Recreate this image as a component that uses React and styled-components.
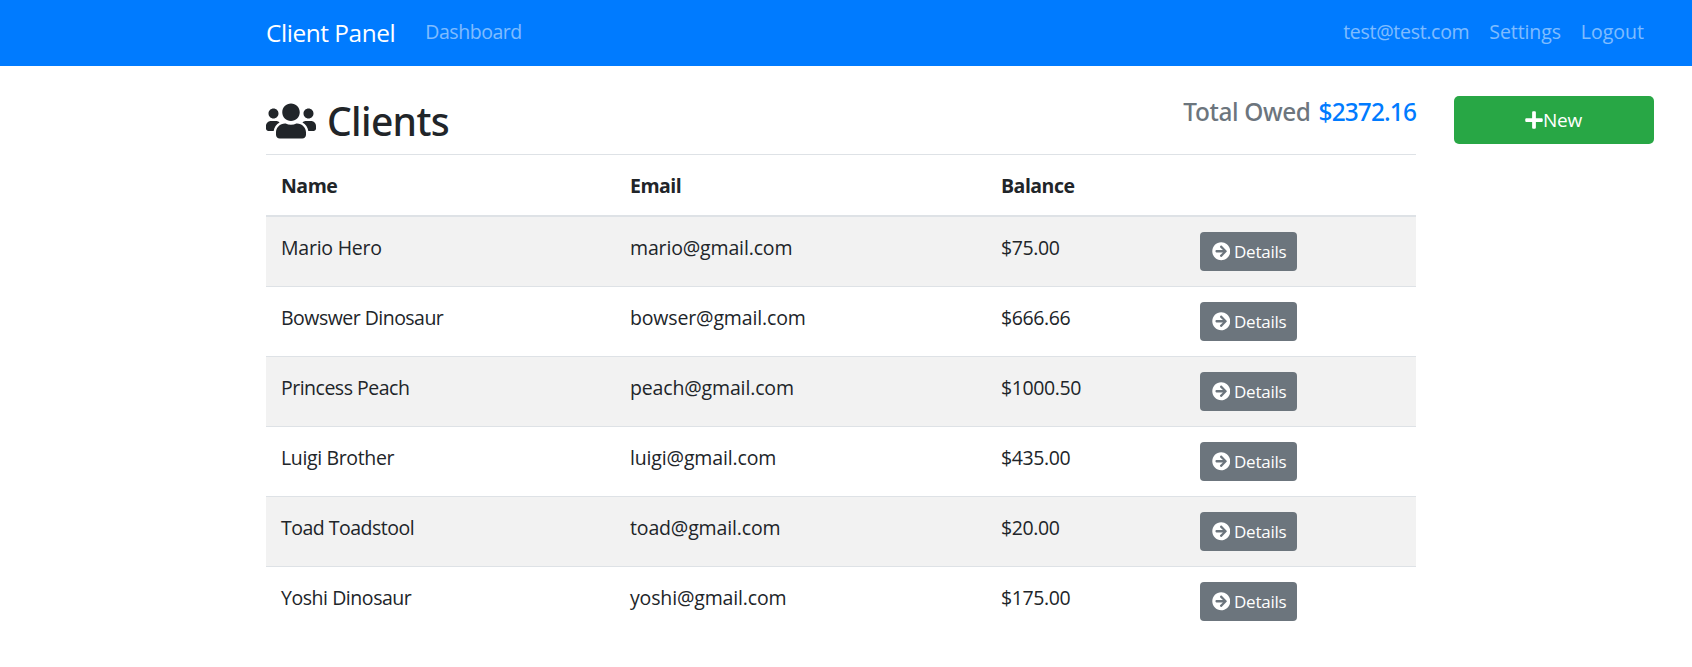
import React from "react";
import styled, { createGlobalStyle } from "styled-components";
import { FaUsers, FaPlus, FaArrowCircleRight } from "react-icons/fa";

const GlobalStyle = createGlobalStyle`
  *, *::before, *::after { box-sizing: border-box; }
  body {
    margin: 0;
    background: #fff;
    color: #212529;
    font-family: "Open Sans", "Noto Sans", sans-serif;
    font-size: 19.5px;
    line-height: 30px;
  }
`;

const Navbar = styled.nav`
  display: flex;
  align-items: center;
  height: 66px;
  padding: 0 48px 0 266px;
  background: #007bff;
`;

const Brand = styled.a`
  margin-right: 30px;
  color: #fff;
  font-size: 24.4px;
  letter-spacing: -0.43px;
  white-space: nowrap;
`;

const NavList = styled.div`
  display: flex;
  gap: 20px;
  margin-left: ${(p) => (p.$end ? "auto" : "0")};
  padding-bottom: 3px;
`;

const NavLink = styled.a`
  color: rgba(255, 255, 255, 0.5);
  letter-spacing: ${(p) => p.$track || 0}px;
`;

const Page = styled.div`
  display: grid;
  grid-template-columns: 1150px 200px;
  column-gap: 38px;
  align-items: start;
  padding: 30px 0 0 266px;
`;

const Header = styled.header`
  display: flex;
  justify-content: space-between;
  height: 58px;
  padding-top: 1px;
`;

const Title = styled.h2`
  display: flex;
  align-items: center;
  gap: 11px;
  height: 48px;
  margin: 0;
  font: 500 39px/48px "Noto Sans", sans-serif;
  letter-spacing: -0.65px;

  svg {
    width: 50px;
    height: 40px;
  }
`;

const Total = styled.h5`
  margin: 0;
  color: #6c757d;
  font: 500 24.4px/30px "Noto Sans", sans-serif;
  letter-spacing: -0.37px;
`;

const Amount = styled.span`
  margin-left: 2px;
  color: #007bff;
  letter-spacing: -0.86px;
`;

const Table = styled.table`
  width: 100%;
  table-layout: fixed;
  border-spacing: 0;
`;

const HeadCell = styled.th`
  width: ${(p) => p.$width}px;
  height: 63px;
  padding: 16px 15px 14px;
  border-top: 1px solid #dee2e6;
  border-bottom: 2px solid #dee2e6;
  font-weight: 700;
  letter-spacing: -0.5px;
  text-align: left;
  vertical-align: top;
`;

const Row = styled.tr`
  &:nth-child(odd) {
    background: #f2f2f2;
  }
`;

const Cell = styled.td`
  height: 70px;
  padding: ${(p) => (p.$action ? "15px" : "16px 15px 14px")};
  border-top: 1px solid #dee2e6;
  letter-spacing: ${(p) => p.$track || 0}px;
  vertical-align: top;

  ${Row}:first-child & {
    height: 69px;
    border-top: 0;
  }
`;

const DetailsButton = styled.a`
  display: flex;
  align-items: center;
  gap: 4px;
  width: 97px;
  height: 39px;
  padding-left: 11.5px;
  border-radius: 4px;
  background: #6c757d;
  color: #fff;
  font-size: 17px;
  letter-spacing: -0.23px;

  svg {
    width: 18.5px;
    height: 18.5px;
  }
`;

const NewButton = styled.a`
  display: flex;
  align-items: center;
  justify-content: center;
  height: 48px;
  padding-right: 1px;
  border-radius: 5px;
  background: #28a745;
  color: #fff;
  font-size: 19px;
  letter-spacing: -0.3px;

  svg {
    width: 18px;
    height: 20px;
  }
`;

const clients = [
  { name: "Mario Hero", email: "mario@gmail.com", balance: "$75.00", track: -0.23 },
  { name: "Bowswer Dinosaur", email: "bowser@gmail.com", balance: "$666.66", track: -0.52 },
  { name: "Princess Peach", email: "peach@gmail.com", balance: "$1000.50", track: -0.5 },
  { name: "Luigi Brother", email: "luigi@gmail.com", balance: "$435.00", track: -0.36 },
  { name: "Toad Toadstool", email: "toad@gmail.com", balance: "$20.00", track: -0.5 },
  { name: "Yoshi Dinosaur", email: "yoshi@gmail.com", balance: "$175.00", track: -0.45 },
];

export default function App() {
  return (
    <>
      <GlobalStyle />
      <Navbar>
        <Brand>Client Panel</Brand>
        <NavList>
          <NavLink $track={-0.45}>Dashboard</NavLink>
        </NavList>
        <NavList $end>
          <NavLink $track={-0.3}>test@test.com</NavLink>
          <NavLink $track={-0.1}>Settings</NavLink>
          <NavLink>Logout</NavLink>
        </NavList>
      </Navbar>
      <Page>
        <main>
          <Header>
            <Title>
              <FaUsers /> Clients
            </Title>
            <Total>
              Total Owed <Amount>$2372.16</Amount>
            </Total>
          </Header>
          <Table>
            <thead>
              <tr>
                <HeadCell $width={349}>Name</HeadCell>
                <HeadCell $width={371}>Email</HeadCell>
                <HeadCell $width={199}>Balance</HeadCell>
                <HeadCell $width={231} />
              </tr>
            </thead>
            <tbody>
              {clients.map((c) => (
                <Row key={c.email}>
                  <Cell $track={c.track}>{c.name}</Cell>
                  <Cell $track={-0.15}>{c.email}</Cell>
                  <Cell $track={-0.4}>{c.balance}</Cell>
                  <Cell $action>
                    <DetailsButton>
                      <FaArrowCircleRight /> Details
                    </DetailsButton>
                  </Cell>
                </Row>
              ))}
            </tbody>
          </Table>
        </main>
        <NewButton>
          <FaPlus />
          New
        </NewButton>
      </Page>
    </>
  );
}
